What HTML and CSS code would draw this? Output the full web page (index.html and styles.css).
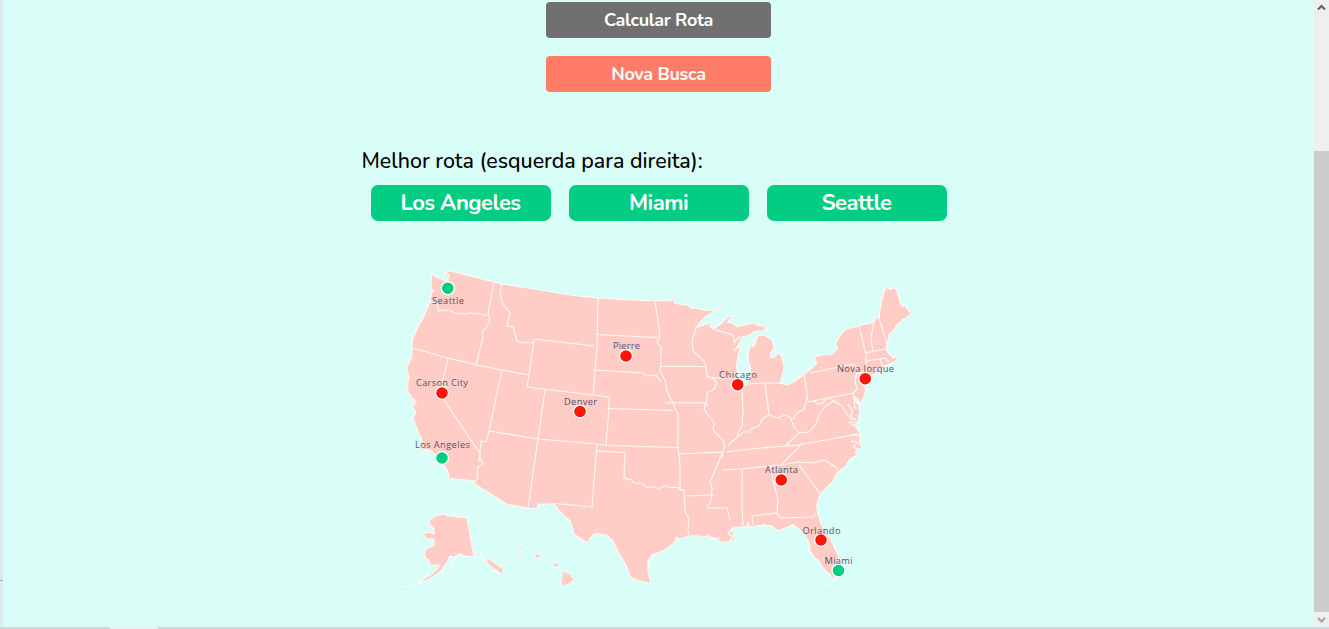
FILE: index.html
```html
<!DOCTYPE html>
<html lang="pt-BR">
<head>
<meta charset="utf-8">
<title>Melhor rota</title>
<link rel="stylesheet" href="styles.css">
</head>
<body>
<div class="window">
  <div class="edge"><span class="edge-mark"></span></div>
  <main class="page">
    <div class="actions">
      <button class="button button-calc">Calcular Rota</button>
      <button class="button button-new">Nova Busca</button>
    </div>
    <section class="route">
      <h2 class="route-title"><span>Melhor rota (esquerda para direita):</span></h2>
      <div class="stops">
        <div class="stop">Los Angeles</div>
        <div class="stop">Miami</div>
        <div class="stop">Seattle</div>
      </div>
    </section>
    <svg class="map" viewBox="395 260 525 335" width="525" height="335">
      <!-- Mainland -->
      <path class="land" d="M431.700 273.300L435 276.500 440 278.500 445 280.500 447.500 281 447 277 445 273 449.300 270.700 470 276 494 282 501.700 284 535 289 558 293 578 296 598.300 298 625 299.700 654.300 300.700H671.300L672.300 296.300 674.300 302.700 683 305 686 304.500 691.700 308.300 696.700 308 703.300 310 715 311.300 706.700 315.700 701.700 320.300 695.700 327.700 706.700 324.300 711.700 322 710 326.500 714 328.700 721.700 323.300 728.300 316.700 732.300 316.300 727.300 322.300 731.700 322.700 737.300 326.700 747.300 324.300 755 323.300 756.700 325.700 764 325.700 765 329.300 769.300 330 761.700 331 755 331 750 335 742.700 336.700 740 341.700 737.300 346.700 734 351 736 349 741 345 738 356.700 736.700 365 737.300 372 740 381.700 743.300 386 747.300 384 750 376.700 750.700 368.300 748 360 748.300 351.700 750.700 345 753 341 752 347 755 345 756.700 338.300 759.300 335 765 335.700 772.300 340 774 348.300 770.700 353.300 771 357.700 775 356.700 778.300 352.700 781.700 356.700 784.300 365 783.300 372 780 383.300 787.300 385 795 381 803.300 375 810 370 816.700 363.300 814.300 357.300 821.700 355 831.700 354.300 837.300 349 836 342.300 841.700 333.300 846 329.300 859 325.700 874 322.300 875.700 318.300 879 317.700 880 310 881.700 300 885 288.300 887 287.500 890 289.500 893 288 895 287.700 897.300 291.700 900.700 304.300 903 306.500 905 305 908 310 911.500 313.300 906 318.300 902 320 900 324 897.300 325 895 329 889.300 334.300 887.300 343.300 886 346.700 888.300 353.300 893.300 358 897 356 898 360 892 363 885 365.700 876.700 373.300 868 376.700 865 386.700 866 390 864 396.700 860 405 859 400 854 396 855 401 860 406 859 414 858 422 855 425 858 430 861 437 859 444 863 447 857 450 857 455 850 459 845 467 838 471.700 833 481.700 826 488 820 495 816.700 505 817.700 513.300 821.700 525 830 538 838 555 840 566.700 836.700 576.700 831.700 578.300 830 574 826.700 572 820.700 565 818 560 815 558 809 550 810 546 805 535 800 530 792.700 525 788 527 778 530.700 771.700 526 763.300 524.700 753.300 526.700 749 526 748 522 747 527 740 527 734 527 731 530 734 533 733 537 737 542 732 540 728 542 720 541.700 715 538 710 537.300 707 536 703 537 698 536 690 535.700 680 539 677 537 675 542 666.700 549 658 553 652 555 648 561 648 570 650.700 583.500 640 581 630 577 628 570 625 563 617.700 551 613 541 606 535 596.700 533.700 592.700 535 587 543 574 534 570.700 521.700 560 511.700 554 504 537.700 504 537 508.500 528 508 507.300 504.500 473.300 483.300 475 481 449 478.300 448 471.700 441.700 461.700 435 455 430 450 421.700 449.300 421.700 440 416.700 428 413 418 416 412 413 408 413 400 408 391.700 407.700 383 409 378 406.700 368.300 411.700 356.700 412 347 412.700 338.300 420 323 425 314 430 301.700 432 290 431 282Z"/>
      <!-- Western states -->
      <path class="line" d="M430 301l7 3 2 7 3-1 3 1 4-1 6 3 10 1 4-1 11 1 7 2M494 282l-6 32 2 6-4 8-4 4 1 5-7 28M412 348l36 10 29 7 25 5 27 5M502 284l-2 10 3 10 7 9-3 13 6 1 4 14 5 2 3-1 7 1 1-2 1 3M534 340l-5 35-2 12M448 358l-8 36 41 61M502 370l-13 61M479 462l2-21 5 1 3-11 49 8M479 455l4 9-5 3-1 8 1 3-4 5M538 439l-10 69M534 339l60 7M527 387l66 8 16 2 0 12-3 36M593 395l4-48 1-49M596 334.500l62 3M593 370l49 3 5 3 9-1 5 7M545 390l-7 49 59 5 10 1.500 72 2M597 445l-5 62-37-3.500M597 451l28 1.500-1 25 3 2 4 0 3 3 8 1 5 4 5-1 7 2 7-3 4 2 8 0 3 3 1 0"/>
      <!-- Central states -->
      <path class="line" d="M655 301l3 21 2 15-3 5 4 5 0 14-1 10 5 9 2 12 6 11 3 8 3 4M660 366.500h46M607 408.500l66 2M666 402.700h38l4 4M678 413l0 35 2 16 0 25 4 2M678 454l44-2 1 5-4 1M684 489l1 22 4 8-1 12 1 4M684 496l30-1M696 328l-4 12 1 11 12 11 2 13 10 7-3 7-7 4 0 7-3 9 3 5 7 8-1 8 10 10 2 7-5 12-6 14-4 9 2 6-1 13-4 7 20 0 3 12M712 328l4 2 17 5 2 8M706 377l12 1 18 0M747 384l18-1 15 0M742 386l1 27-1 13-4 7-1 5-7 5-1 3M765 383l4 32-7 4-3 7-8 3-1 3-8 0M769 415l9 3 7-3 6 3M742 433l-5 5M727 452l15-2 18-2 39-3M722 470l20-1 28-3 12-1M742 469l0 37 1 20M770 466l8 35-1 12-25 3 1 9M777 513l3 5 33-1 3-4"/>
      <!-- Eastern states -->
      <path class="line" d="M804 374l4 28 45-9 4-4-2-8 3-10-5-7-43 9M807 398l-3 11-7 4-3 5-3 1 3 8 5 6-13 12M793 446l65-12M803 442l-4 5-18 18 17-3 14 1 13-3 13 9M799 465l6 8 8 11 7 10M799 433l10-1 7-8 4-11 7-8 7-4-6-3-7 6-5-1-2-3M834 401l8 5 5 8 6 8 4 1M853 393l2 15 5 0M859 326l7 28 0 15 1 8M874 322l-3 16 2 14M879 318l8 26M865 353l20-4 2-2M866 361l19-3 4 4M880 359l3 8"/>
      <!-- Sounds, bays and islands -->
      <path class="shore" d="M446 273l3 2-1 5-3 2M411 398l5 3-2 5M431 292l3-1M714 310l9-5 3-2M734 343l4-5 3-1M754 341l2-4M873 369l7-1M895 327l4-4 2-1M892 350l4 4 2 5-4 3M848 404l4 6-1 7 5 3M849 422l7 5M851 435l9 1M851 441l7 1-5 5 5 2-4 5M808 548l4 7-2 1M421 453l6 1 2 2M434 464l3 4M820 588l9-3 8-7M732 529l-4 5 5 2-3 5M675 537l3 5M653 554l-2 8-3 4M708 535l4 4 8-1M862 372l-5 1-2 7"/>
      <!-- Alaska -->
      <path class="land" d="M428.500 521L434 516.500 443 514 449 516 457 517 467 518 474 557 465 556 460 554 454 557 450 556 447 562 441 571 434 576 427 580 418 582 430 575 437 569 440 565 434 565 431 566 428 560 424 555 426 549 434 545 434 539 427 539 423 534 430 532 434 534 434 529 430 525Z"/>
      <path class="shore" d="M397 587l15-1 10-3M415 541l5 3M408 554l1 1M420 557l3 1M446 573l4-1M448 570l5-9 5-4M474 556l7 2 5 2 4 4 8 7M485 557l10 6 9 8M487 562l12 7M493 570l8 5"/>
      <path class="island" d="M486 557l8 6 9 6 0 5-10-6-6-6Z"/>
      <!-- Hawaii -->
      <path class="land thin" d="M518 548l3-1 2 3-4 0ZM535 555l3-1 3 4-5 0ZM547 560l5 0M552 563l5 0 3 3-5 1ZM563 571l7 3 4 6-9 6-4-2 1-7Z"/>
      <!-- Cities -->
      <g class="city">
        <circle cx="626" cy="356" r="6.500"/><circle cx="442" cy="393" r="6.500"/><circle cx="580" cy="411.500" r="6.500"/><circle cx="737.700" cy="384.700" r="6.500"/><circle cx="865.300" cy="378.700" r="6.500"/><circle cx="781.300" cy="480" r="6.500"/><circle cx="821" cy="540" r="6.500"/>
      </g>
      <g class="city selected">
        <circle cx="447.800" cy="288.200" r="6.500"/><circle cx="442" cy="458" r="6.500"/><circle cx="838.500" cy="570.500" r="6.500"/>
      </g>
      <g class="label">
        <text x="432" y="304" textLength="32">Seattle</text>
        <text x="613" y="349" textLength="27">Pierre</text>
        <text x="416" y="386" textLength="52">Carson City</text>
        <text x="564" y="405" textLength="33">Denver</text>
        <text x="719" y="378" textLength="38">Chicago</text>
        <text x="837" y="372" textLength="57">Nova Iorque</text>
        <text x="415" y="448" textLength="55">Los Angeles</text>
        <text x="765" y="473" textLength="33">Atlanta</text>
        <text x="802.500" y="534" textLength="38">Orlando</text>
        <text x="824.500" y="564" textLength="28">Miami</text>
      </g>
    </svg>
  </main>
  <div class="scrollbar">
    <svg width="15" height="16" viewBox="0 0 15 16"><path class="arrow" d="M4 9.500L7.500 6 11 9.500"/></svg>
    <div class="thumb"></div>
    <svg class="down" width="15" height="15" viewBox="0 0 15 15"><path class="arrow muted" d="M4 6L7.500 9.500 11 6"/></svg>
  </div>
  <footer class="bottom"><span class="bottom-mark"></span></footer>
</div>
</body>
</html>
```
FILE: styles.css
```css
* { box-sizing: border-box; }
body { margin: 0; overflow: hidden; font-family: Nunito, "Open Sans", sans-serif; }
.window {
  display: grid;
  grid-template: 627px 2px / 3px 1311px 15px;
  width: 1329px;
  height: 629px;
}
.edge { background: #dde9f2; padding-top: 580px; }
.edge-mark { display: block; height: 1px; background: #a9b8bd; }
.page { background: #d9fef8; display: flex; flex-direction: column; align-items: center; padding-top: 2px; }
.actions { display: flex; flex-direction: column; gap: 18px; }
.button {
  width: 225px;
  height: 36px;
  padding: 0;
  border: 0;
  border-radius: 4px;
  color: #fff;
  font: 700 18px/36px Nunito, "Open Sans", sans-serif;
  letter-spacing: -0.3px;
}
.button-calc { background: #707070; }
.button-new { background: #ff7c66; }
.route { width: 594px; margin-top: 55px; }
.route-title { margin: 0; height: 38px; font-size: 21.4px; line-height: 28px; font-weight: 500; letter-spacing: 0; white-space: nowrap; }
.stops { display: flex; gap: 18px; padding-left: 9px; }
.stop {
  width: 180px;
  height: 36px;
  border-radius: 7px;
  background: #02cd83;
  color: #fff;
  font-size: 22px;
  line-height: 36px;
  font-weight: 700;
  letter-spacing: -0.5px;
  text-align: center;
}
.map { display: block; flex: none; margin: 39px 0 0 -2px; }
.land { fill: #ffcdc6; stroke: #fff9f6; stroke-width: 1.1; stroke-linejoin: round; }
.thin { stroke-width: 0.8; }
.line { fill: none; stroke: #fff9f6; stroke-width: 1.1; stroke-linejoin: round; }
.shore { fill: none; stroke: #f8faf7; stroke-width: 1.5; stroke-dasharray: 3 0.6; }
.island { fill: #ffcdc6; stroke: #fff9f6; stroke-width: 1; stroke-dasharray: 2 1; }
.city { fill: #ff1408; stroke: #fff; stroke-width: 1.4; }
.selected { fill: #02cd83; }
.label { fill: #595168; font: 9.3px "Open Sans", sans-serif; }
.scrollbar { background: #efefef; }
.scrollbar svg { display: block; }
.thumb { height: 461px; margin-top: 135px; background: #cdcdcd; }
.arrow { fill: none; stroke: #606060; stroke-width: 2; }
.muted { stroke: #a3a3a3; }
.bottom { grid-column: 1 / -1; background: #cdd8d8; padding-left: 110px; }
.bottom-mark { display: block; width: 48px; height: 2px; background: #eaf1f1; }
```
